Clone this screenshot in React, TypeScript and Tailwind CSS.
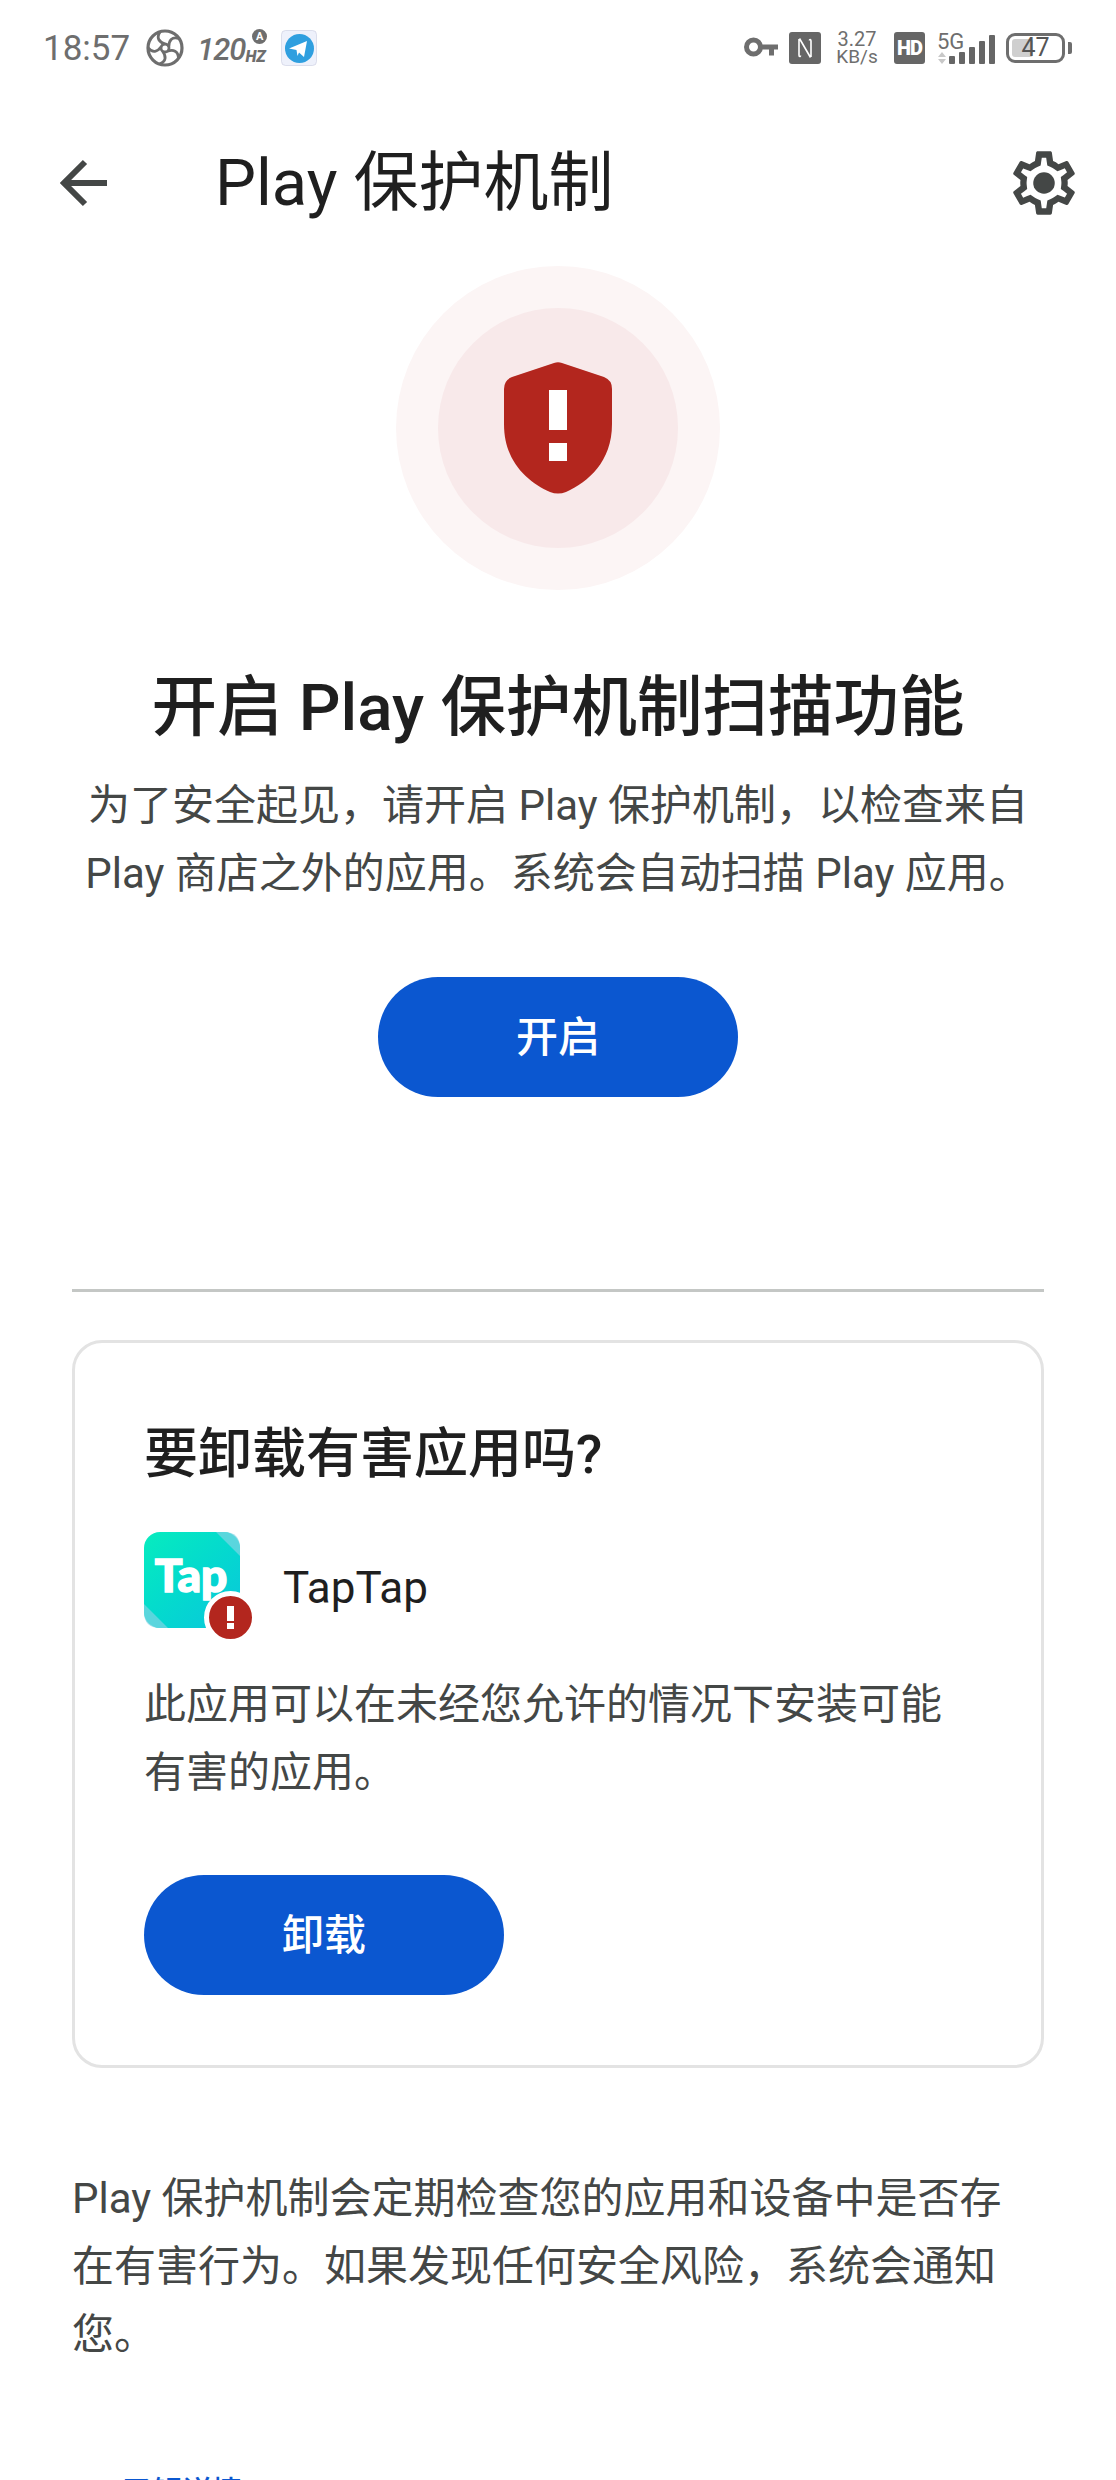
const font = 'font-[Roboto,"Noto_Sans_CJK_SC",sans-serif]'

function FanIcon() {
  const blades = [0, 72, 144, 216, 288]
  return (
    <svg width="38" height="38" viewBox="0 0 38 38" fill="none" stroke="#6e6e6e" strokeWidth="2.8">
      <circle cx="19" cy="19" r="17" strokeWidth="3.2" />
      <circle cx="19" cy="19" r="4" />
      {blades.map((deg) => (
        <path key={deg} d="M19 15C13 13 10 9 14 3" transform={`rotate(${deg} 19 19)`} />
      ))}
    </svg>
  )
}

function TelegramIcon() {
  return (
    <svg width="36" height="36" viewBox="0 0 36 36">
      <rect x="0.5" y="0.5" width="35" height="35" rx="4" fill="#eef1fb" stroke="#c9cde0" strokeWidth="0.6" />
      <circle cx="18.5" cy="18.5" r="14.5" fill="#2f9fdf" />
      <path d="M8 18.5 26 11l-3 16-5-4.5-1.5 3.5-1-6z" fill="#fff" />
    </svg>
  )
}

function KeyIcon() {
  return (
    <svg width="35" height="22" viewBox="0 0 35 22" fill="none">
      <circle cx="10.5" cy="10" r="7" stroke="#6e6e6e" strokeWidth="5" />
      <path d="M18 7.5h17v5h-4v6h-5v-6h-8z" fill="#6e6e6e" />
    </svg>
  )
}

function NfcIcon() {
  return (
    <svg width="32" height="32" viewBox="0 0 32 32" fill="none">
      <rect width="32" height="32" rx="3" fill="#666" />
      <path d="M10 7v16c0 2 1.5 2 1.5 .5M10.5 6.5 21.5 25.5M22 25V9c0-2-1.5-2-1.5-.5" stroke="#fff" strokeWidth="1.6" />
    </svg>
  )
}

function DataArrows() {
  return (
    <svg width="8" height="12" viewBox="0 0 8 12" fill="#c8c8c8">
      <path d="M4 0l4 5H0zM0 7h8l-4 5z" />
    </svg>
  )
}

function SignalBars() {
  return (
    <div className="flex items-end gap-[4px] h-[30px]">
      <div className="w-[6px] h-[8px] bg-[#666666] rounded-[1px]" />
      <div className="w-[6px] h-[12px] bg-[#666666] rounded-[1px]" />
      <div className="w-[6px] h-[17px] bg-[#666666] rounded-[1px]" />
      <div className="w-[6px] h-[23px] bg-[#666666] rounded-[1px]" />
      <div className="w-[6px] h-[29px] bg-[#666666] rounded-[1px]" />
    </div>
  )
}

function SettingsIcon() {
  return (
    <svg width="76" height="76" viewBox="0 0 24 24" fill="#444746">
      <path d="M19.43 12.98c.04-.32.07-.64.07-.98 0-.34-.03-.66-.07-.98l2.11-1.65c.19-.15.24-.42.12-.64l-2-3.46c-.09-.16-.26-.25-.44-.25-.06 0-.12.01-.17.03l-2.49 1c-.52-.4-1.08-.73-1.69-.98l-.38-2.65C14.46 2.18 14.25 2 14 2h-4c-.25 0-.46.18-.49.42l-.38 2.65c-.61.25-1.17.59-1.69.98l-2.49-1c-.06-.02-.12-.03-.18-.03-.17 0-.34.09-.43.25l-2 3.46c-.13.22-.07.49.12.64l2.11 1.65c-.04.32-.07.65-.07.98 0 .33.03.66.07.98l-2.11 1.65c-.19.15-.24.42-.12.64l2 3.46c.09.16.26.25.44.25.06 0 .12-.01.17-.03l2.49-1c.52.4 1.08.73 1.69.98l.38 2.65c.03.24.24.42.49.42h4c.25 0 .46-.18.49-.42l.38-2.65c.61-.25 1.17-.59 1.69-.98l2.49 1c.06.02.12.03.18.03.17 0 .34-.09.43-.25l2-3.46c.12-.22.07-.49-.12-.64l-2.11-1.65zm-1.98-1.71c.04.31.05.52.05.73 0 .21-.02.43-.05.73l-.14 1.13.89.7 1.08.84-.7 1.21-1.27-.51-1.04-.42-.9.68c-.43.32-.84.56-1.25.73l-1.06.43-.16 1.13-.2 1.35h-1.4l-.19-1.35-.16-1.13-1.06-.43c-.43-.18-.83-.41-1.23-.71l-.91-.7-1.06.43-1.27.51-.7-1.21 1.08-.84.89-.7-.14-1.13c-.03-.31-.05-.54-.05-.74s.02-.43.05-.73l.14-1.13-.89-.7-1.08-.84.7-1.21 1.27.51 1.04.42.9-.68c.43-.32.84-.56 1.25-.73l1.06-.43.16-1.13.2-1.35h1.39l.19 1.35.16 1.13 1.06.43c.43.18.83.41 1.23.71l.91.7 1.06-.43 1.27-.51.7 1.21-1.07.85-.89.7.14 1.13z" />
      <circle cx="12" cy="12" r="3.4" />
    </svg>
  )
}

function BackIcon() {
  return (
    <svg width="47" height="48" viewBox="0 0 47 48" fill="none" stroke="#444746" strokeWidth="6">
      <path d="M47 24H5M25 3 4 24l21 21" />
    </svg>
  )
}

function ShieldIcon() {
  return (
    <svg width="108" height="132" viewBox="0 0 108 132">
      <path
        d="M50 1 Q54 -0.5 58 1 L100 15 Q108 18 108 27 V62 C108 100 84 120 62 130 Q54 133 46 130 C24 120 0 100 0 62 V27 Q0 18 8 15 Z"
        fill="#b3261e"
      />
      <rect x="45" y="28" width="18" height="40" fill="#fff" />
      <rect x="45" y="81" width="18" height="18" fill="#fff" />
    </svg>
  )
}

function TapTapIcon() {
  return (
    <div className="relative w-[96px] h-[96px]">
      <div className="w-full h-full rounded-[16px] overflow-hidden bg-gradient-to-br from-[#08ecbe] to-[#0cc6dc] flex items-center justify-center">
        <span className="font-['Lato'] font-black text-[46px] leading-none text-white [-webkit-text-stroke:1.5px_white] -mt-[10px] -ml-[2px]">Tap</span>
      </div>
      <svg className="absolute inset-0" width="96" height="96" viewBox="0 0 96 96">
        <path d="M72 0h8q16 0 16 16v8z" fill="#7fd4e4" opacity="0.7" />
        <path d="M0 72v8q0 16 16 16h8z" fill="#7fd4e4" opacity="0.7" />
      </svg>
      <div className="absolute left-[60px] top-[59px] w-[53px] h-[53px] rounded-full bg-[#b3261e] border-[5px] border-white flex flex-col items-center justify-center gap-[2px]">
        <div className="w-[7px] h-[15px] bg-white" />
        <div className="w-[7px] h-[6px] bg-white" />
      </div>
    </div>
  )
}

export default function App() {
  return (
    <div className={`w-[1116px] h-[2480px] overflow-hidden bg-white ${font}`}>
      {/* status bar */}
      <div className="h-[96px] flex items-center justify-between pl-[43px] pr-[44px] text-[#6e6e6e]">
        <div className="flex items-center">
          <span className="text-[35px] leading-none">18:57</span>
          <div className="ml-[16px]">
            <FanIcon />
          </div>
          <div className="ml-[13px] relative flex items-end w-[70px] h-[38px]">
            <span className="text-[31px] leading-[34px] italic font-medium tracking-[-1px]">120</span>
            <span className="text-[16px] leading-[20px] italic font-black">HZ</span>
            <span className="absolute right-[0px] top-0 w-[15px] h-[15px] rounded-full bg-[#6e6e6e] text-white text-[11px] leading-[15px] text-center font-bold">A</span>
          </div>
          <div className="ml-[14px]">
            <TelegramIcon />
          </div>
        </div>
        <div className="flex items-center">
          <KeyIcon />
          <div className="ml-[11px]">
            <NfcIcon />
          </div>
          <div className="ml-[16px] w-[40px] flex flex-col items-center text-[#6e6e6e]">
            <span className="text-[20px] leading-[18px]">3.27</span>
            <span className="text-[19px] leading-[18px]">KB/s</span>
          </div>
          <div className="ml-[17px] w-[31px] h-[32px] rounded-[3px] bg-[#666666] text-white text-[20px] font-black flex items-center justify-center tracking-[-1px]">
            HD
          </div>
          <div className="ml-[12px] relative w-[58px] h-[32px] flex justify-end items-end">
            <span className="absolute left-0 top-0 text-[22px] leading-[20px]">5G</span>
            <div className="absolute left-[1px] bottom-0">
              <DataArrows />
            </div>
            <SignalBars />
          </div>
          <div className="ml-[11px] w-[59px] h-[30px] rounded-[9px] border-[3px] border-[#6e6e6e] p-[3px] relative flex items-center">
            <div className="w-[45%] h-full rounded-[3px] bg-[#cfcfcf]" />
            <span className="absolute inset-0 text-center text-[25px] leading-[24px] text-[#555555]">47</span>
          </div>
          <div className="ml-[3px] w-[4px] h-[12px] rounded-r-[2px] bg-[#6e6e6e]" />
        </div>
      </div>

      {/* app bar */}
      <div className="h-[170px] flex items-start pt-[49px] pl-[60px] pr-[34px]">
        <div className="mt-[14px]">
          <BackIcon />
        </div>
        <h1 className="ml-[108px] mt-[2px] text-[65px] leading-[72px] text-[#1f1f1f] font-normal">Play 保护机制</h1>
        <div className="ml-auto">
          <SettingsIcon />
        </div>
      </div>

      {/* hero */}
      <div className="mx-auto w-[324px] h-[324px] rounded-full bg-[#fcf5f5] flex items-center justify-center">
        <div className="w-[240px] h-[240px] rounded-full bg-[#f8e9ea] flex items-center justify-center">
          <ShieldIcon />
        </div>
      </div>

      <h2 className="mt-[76px] text-center text-[65.5px] leading-[84px] font-medium text-[#1f1f1f]">
        开启 Play 保护机制扫描功能
      </h2>
      <p className="mt-[22px] text-center text-[42px] leading-[68px] text-[#444746]">
        为了安全起见，请开启 Play 保护机制，以检查来自
        <br />
        Play 商店之外的应用。系统会自动扫描 Play 应用。
      </p>
      <div className="mt-[69px] flex justify-center">
        <button className="w-[360px] h-[120px] rounded-full bg-[#0b57d0] text-white text-[42px] font-medium">开启</button>
      </div>

      <div className="mt-[192px] mx-[72px] h-[3px] bg-[#c4c7c5]" />

      {/* harmful app card */}
      <div className="mt-[48px] mx-[72px] rounded-[30px] border-[3px] border-[#e3e3e3] pt-[76px] pb-[70px] pl-[69px] pr-[60px]">
        <h3 className="text-[54px] leading-[72px] font-medium text-[#1f1f1f]">要卸载有害应用吗?</h3>
        <div className="mt-[41px] flex items-center">
          <TapTapIcon />
          <span className="ml-[43px] mt-[16px] text-[44px] text-[#1f1f1f]">TapTap</span>
        </div>
        <p className="mt-[43px] text-[42px] leading-[68px] text-[#444746]">
          此应用可以在未经您允许的情况下安装可能
          <br />
          有害的应用。
        </p>
        <button className="mt-[68px] w-[360px] h-[120px] rounded-full bg-[#0b57d0] text-white text-[42px] font-medium">卸载</button>
      </div>

      <p className="mt-[97px] mx-[72px] text-[42px] leading-[68px] text-[#444746]">
        Play 保护机制会定期检查您的应用和设备中是否存
        <br />
        在有害行为。如果发现任何安全风险，系统会通知
        <br />
        您。
      </p>
      <div className="mt-[103px] ml-[122px] text-[30px] leading-[40px] font-medium text-[#0b57d0]">了解详情</div>
    </div>
  )
}
